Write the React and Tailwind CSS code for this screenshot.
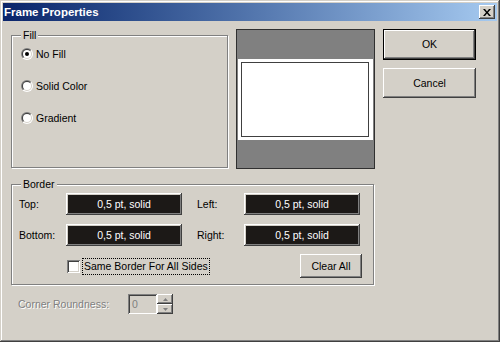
import React from 'react';

const raised =
    'shadow-[inset_-1px_-1px_0_#404040,inset_1px_1px_0_#ffffff,inset_-2px_-2px_0_#808080,inset_2px_2px_0_#d4d0c8]';
const sunken =
    'shadow-[inset_1px_1px_0_#808080,inset_-1px_-1px_0_#ffffff,inset_2px_2px_0_#404040,inset_-2px_-2px_0_#d4d0c8]';
const etched = 'border border-[#808080] shadow-[inset_1px_1px_0_#ffffff,1px_1px_0_#ffffff]';

function Radio({ checked, id }) {
    return (
        <svg width="12" height="12" viewBox="0 0 12 12" className="shrink-0">
            <defs>
                <linearGradient id={`o${id}`} x1="0" y1="0" x2="1" y2="1">
                    <stop offset="0.5" stopColor="#808080" />
                    <stop offset="0.5" stopColor="#ffffff" />
                </linearGradient>
                <linearGradient id={`i${id}`} x1="0" y1="0" x2="1" y2="1">
                    <stop offset="0.5" stopColor="#404040" />
                    <stop offset="0.5" stopColor="#d4d0c8" />
                </linearGradient>
            </defs>
            <circle cx="6" cy="6" r="6" fill={`url(#o${id})`} />
            <circle cx="6" cy="6" r="5" fill={`url(#i${id})`} />
            <circle cx="6" cy="6" r="4" fill="#ffffff" />
            {checked && <circle cx="6" cy="6" r="2" fill="#000000" />}
        </svg>
    );
}

function BorderField({ label }) {
    return (
        <div className="flex items-center">
            <span className="w-[47px]">{label}</span>
            <div className={`w-[116px] h-[22px] bg-[#1c1917] text-white flex items-center justify-center ${raised}`}>
                0,5 pt, solid
            </div>
        </div>
    );
}

export default function App() {
    return (
        <div
            className="w-[500px] h-[342px] bg-[#d4d0c8] text-black text-[10.5px] leading-[13px] p-[3px] flex flex-col shadow-[inset_-1px_-1px_0_#404040,inset_1px_1px_0_#d4d0c8,inset_-2px_-2px_0_#808080,inset_2px_2px_0_#ffffff]"
            style={{ fontFamily: '"Liberation Sans", Arial, sans-serif' }}
        >
            {/* title bar */}
            <div className="h-[18px] flex items-center justify-between pl-[1px] pr-[2px] bg-gradient-to-r from-[#0a246a] to-[#a6caf0]">
                <span className="text-white font-bold text-[11.5px]">Frame Properties</span>
                <button className={`w-[16px] h-[14px] bg-[#d4d0c8] flex items-center justify-center ${raised}`}>
                    <svg width="8" height="7" viewBox="0 0 8 7">
                        <path d="M0 0h2l2 2.5L6 0h2L5 3.5 8 7H6L4 4.5 2 7H0l3-3.5z" fill="#000" />
                    </svg>
                </button>
            </div>

            <div className="pl-[8px] pt-[8px] flex flex-col">
                {/* top row */}
                <div className="flex items-start">
                    <fieldset className={`w-[217px] h-[139px] pl-[9px] ${etched}`}>
                        <legend className="px-[2px] bg-[#d4d0c8]">Fill</legend>
                        <div className="flex flex-col mt-[5px] gap-[18px]">
                            <label className="flex items-center gap-[3px] h-[14px]">
                                <Radio checked id="a" />
                                <span>No Fill</span>
                            </label>
                            <label className="flex items-center gap-[3px] h-[14px]">
                                <Radio id="b" />
                                <span>Solid Color</span>
                            </label>
                            <label className="flex items-center gap-[3px] h-[14px]">
                                <Radio id="c" />
                                <span>Gradient</span>
                            </label>
                        </div>
                    </fieldset>

                    <div className="ml-[8px] w-[139px] h-[140px] border border-[#303030] bg-[#808080] flex items-center justify-center">
                        <div className="w-[135px] h-[81px] bg-white pl-[3px] pr-[4px] py-[3px]">
                            <div className="w-full h-full border border-[#404040]" />
                        </div>
                    </div>

                    <div className="ml-[8px] flex flex-col gap-[8px]">
                        <button className="w-[93px] h-[31px] border border-black bg-[#d4d0c8]">
                            <div className={`w-full h-full flex items-center justify-center ${raised}`}>OK</div>
                        </button>
                        <button className={`w-[93px] h-[30px] bg-[#d4d0c8] flex items-center justify-center ${raised}`}>
                            Cancel
                        </button>
                    </div>
                </div>

                {/* border group */}
                <fieldset className={`mt-[9px] w-[363px] h-[107px] pl-[7px] ${etched}`}>
                    <legend className="ml-[2px] px-[2px] bg-[#d4d0c8]">Border</legend>
                    <div className="mt-[2px] flex flex-col gap-[9px]">
                        <div className="flex gap-[15px]">
                            <BorderField label="Top:" />
                            <BorderField label="Left:" />
                        </div>
                        <div className="flex gap-[15px]">
                            <BorderField label="Bottom:" />
                            <BorderField label="Right:" />
                        </div>
                    </div>
                    <div className="mt-[8px] flex items-center">
                        <label className="ml-[48px] flex items-center gap-[2px] h-[24px]">
                            <span className={`w-[13px] h-[13px] bg-white ${sunken}`} />
                            <span className="border border-dotted border-black px-[1px] py-[1px]">
                                Same Border For All Sides
                            </span>
                        </label>
                        <button className={`ml-auto mr-[11px] w-[62px] h-[24px] bg-[#d4d0c8] flex items-center justify-center ${raised}`}>
                            Clear All
                        </button>
                    </div>
                </fieldset>

                {/* corner roundness */}
                <div className="mt-[9px] ml-[7px] flex items-center h-[20px]">
                    <span className="w-[110px] text-[#808080] [text-shadow:1px_1px_0_#ffffff]">Corner Roundness:</span>
                    <div className={`w-[29px] h-[20px] bg-[#d4d0c8] pl-[4px] flex items-center text-[#808080] ${sunken}`}>
                        0
                    </div>
                    <div className="flex flex-col w-[16px] h-[20px]">
                        <div className={`h-[10px] bg-[#d4d0c8] flex items-center justify-center ${raised}`}>
                            <svg width="5" height="3" viewBox="0 0 5 3">
                                <path d="M2.5 0L5 3H0z" fill="#808080" />
                            </svg>
                        </div>
                        <div className={`h-[10px] bg-[#d4d0c8] flex items-center justify-center ${raised}`}>
                            <svg width="5" height="3" viewBox="0 0 5 3">
                                <path d="M0 0h5L2.5 3z" fill="#808080" />
                            </svg>
                        </div>
                    </div>
                </div>
            </div>
        </div>
    );
}
